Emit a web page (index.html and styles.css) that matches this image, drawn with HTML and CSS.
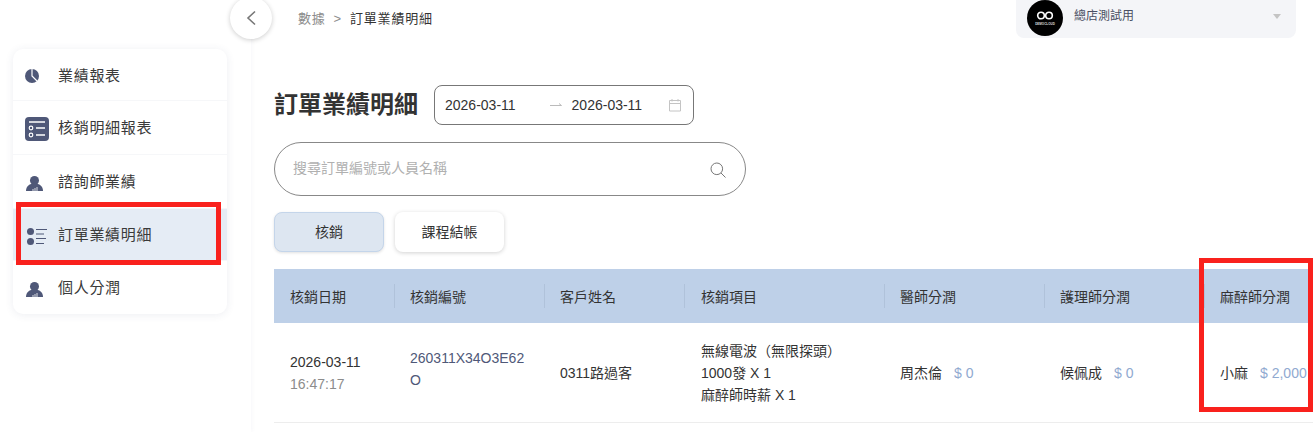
FILE: index.html
```html
<!DOCTYPE html>
<html lang="zh-Hant">
<head>
  <meta charset="UTF-8">
  <title>訂單業績明細</title>
  <link rel="stylesheet" href="styles.css">
</head>
<body>
  <div class="layout">
    <aside class="sidebar">
      <nav class="menu">
        <a class="menu-item">
          <svg class="menu-icon" viewBox="0 0 24 24"><circle cx="7" cy="12" r="7" fill="#4f5878"/><path d="M7 5v7l5 5" fill="none" stroke="#fff" stroke-width="1.200"/></svg>
          <span>業績報表</span>
        </a>
        <a class="menu-item">
          <svg class="menu-icon" viewBox="0 0 24 24"><rect width="24" height="24" rx="4" fill="#4f5878"/><path d="M4 5h16" stroke="#fff" stroke-width="1.500"/><circle cx="6" cy="11" r="1.800" fill="none" stroke="#fff" stroke-width="1.200"/><circle cx="6" cy="18" r="1.800" fill="none" stroke="#fff" stroke-width="1.200"/><path d="M11 11h9M11 18h9" stroke="#fff" stroke-width="1.500"/></svg>
          <span>核銷明細報表</span>
        </a>
        <a class="menu-item">
          <svg class="menu-icon" viewBox="0 0 24 24"><circle cx="9.500" cy="10.500" r="4.500" fill="#4f5878"/><path d="M1 21c0-5 3.500-7.500 8.500-7.500s8.500 2.500 8.500 7.500z" fill="#4f5878"/><path d="M8 21v-2M10 21v-3M12 21v-4" stroke="#fff" stroke-width=".8"/></svg>
          <span>諮詢師業績</span>
        </a>
        <a class="menu-item active">
          <svg class="menu-icon" viewBox="0 0 24 24"><circle cx="5.500" cy="8.500" r="3.500" fill="#4f5878"/><circle cx="5.500" cy="18.500" r="3.500" fill="#4f5878"/><path d="M11 6.500h11M11 11h8M11 15.500h10M11 20.500h8" stroke="#4f5878" stroke-width="1.100"/></svg>
          <span>訂單業績明細</span>
        </a>
        <a class="menu-item">
          <svg class="menu-icon" viewBox="0 0 24 24"><circle cx="9.500" cy="10.500" r="4.500" fill="#4f5878"/><path d="M1 21c0-5 3.500-7.500 8.500-7.500s8.500 2.500 8.500 7.500z" fill="#4f5878"/><path d="M8 21v-2M10 21v-3M12 21v-4" stroke="#fff" stroke-width=".8"/></svg>
          <span>個人分潤</span>
        </a>
      </nav>
    </aside>

    <button class="collapse-btn">
      <svg width="12" height="16" viewBox="0 0 12 16"><path d="M10 1.500 3 8l7 6.500" fill="none" stroke="#777" stroke-width="1.600"/></svg>
    </button>

    <main class="content">
      <header class="topbar">
        <div class="breadcrumb">
          <span class="crumb-parent">數據</span>
          <span class="crumb-sep">&gt;</span>
          <span>訂單業績明細</span>
        </div>
        <div class="store-select">
          <div class="store-logo">
            <svg width="18" height="9" viewBox="0 0 18 9"><circle cx="5" cy="4.500" r="3.300" fill="none" stroke="#fff" stroke-width="1.600"/><circle cx="13" cy="4.500" r="3.300" fill="none" stroke="#fff" stroke-width="1.600"/></svg>
            <span class="store-logo-text">DEMOCLOUD</span>
          </div>
          <span class="store-name">總店測試用</span>
          <span class="store-caret"></span>
        </div>
      </header>

      <div class="title-row">
        <h1>訂單業績明細</h1>
        <div class="date-range">
          <span class="date-value">2026-03-11</span>
          <svg class="date-arrow" width="12" height="6" viewBox="0 0 12 6"><path d="M0 3.500h11.500M9 1.500l2.500 2" fill="none" stroke="#bbb" stroke-width="1"/></svg>
          <span class="date-value">2026-03-11</span>
          <svg class="date-icon" width="14" height="14" viewBox="0 0 14 14"><path d="M1.500 2.500h11v10.500h-11zM1.500 5.500h11M4 1v2.500M10 1v2.500" fill="none" stroke="#c4c4c4" stroke-width="1"/></svg>
        </div>
      </div>

      <div class="search-box">
        <span class="search-placeholder">搜尋訂單編號或人員名稱</span>
        <svg class="search-icon" width="16" height="16" viewBox="0 0 16 16"><circle cx="6.800" cy="6.800" r="5.800" fill="none" stroke="#777" stroke-width="1"/><path d="m11 11 4.500 4.500" stroke="#777" stroke-width="1"/></svg>
      </div>

      <div class="tabs">
        <button class="tab tab-active">核銷</button>
        <button class="tab">課程結帳</button>
      </div>

      <div class="table-wrap">
        <table class="report">
          <colgroup>
            <col class="col-date"><col class="col-no"><col class="col-name"><col class="col-item"><col class="col-doctor"><col class="col-nurse"><col class="col-anes">
          </colgroup>
          <thead>
            <tr>
              <th>核銷日期</th>
              <th>核銷編號</th>
              <th>客戶姓名</th>
              <th>核銷項目</th>
              <th>醫師分潤</th>
              <th>護理師分潤</th>
              <th>麻醉師分潤</th>
            </tr>
          </thead>
          <tbody>
            <tr>
              <td>2026-03-11<div class="time">16:47:17</div></td>
              <td class="order-no">260311X34O3E62O</td>
              <td>0311路過客</td>
              <td>無線電波（無限探頭）<br>1000發 X 1<br>麻醉師時薪 X 1</td>
              <td>周杰倫<span class="money">$ 0</span></td>
              <td>候佩成<span class="money">$ 0</span></td>
              <td class="nowrap">小麻<span class="money">$ 2,000</span></td>
            </tr>
          </tbody>
        </table>
      </div>
    </main>
  </div>

  <div class="mark mark-menu"></div>
  <div class="mark mark-col"></div>
</body>
</html>
```

FILE: styles.css
```css
* {
  box-sizing: border-box;
}
html, body {
  height: 100%;
  margin: 0;
  overflow: hidden;
}
body {
  font-family: "Liberation Sans", "Noto Sans CJK TC", sans-serif;
  font-size: 14px;
  color: #333;
  background: #fff;
}
.layout {
  display: flex;
  height: 432px;
}

/* sidebar */
.sidebar {
  width: 251px;
  flex-shrink: 0;
  padding: 49px 24px 0 13px;
  box-shadow: 1px 0 4px rgba(90, 100, 160, 0.05);
}
.menu {
  border-radius: 10px;
  background: #fff;
  box-shadow: 0 1px 8px rgba(60, 70, 110, 0.09);
  overflow: hidden;
}
.menu-item {
  display: flex;
  align-items: center;
  height: 53px;
  padding: 0 0 2px 12px;
  gap: 9px;
  font-size: 15px;
  letter-spacing: 0.7px;
  color: #3a3a3a;
  border-bottom: 1px solid #f6f7f9;
}
.menu-item:nth-child(1),
.menu-item:nth-child(4) {
  height: 52px;
}
.menu-item:nth-child(2),
.menu-item:nth-child(3) {
  height: 54px;
}
.menu-item:nth-child(1) span {
  margin-top: 2px;
}
.menu-item:last-child {
  border-bottom: 0;
}
.menu-item.active {
  background: #e5ecf5;
}
.menu-icon {
  width: 24px;
  height: 24px;
  margin-top: 3px;
  flex-shrink: 0;
}
.menu-item:nth-child(1) .menu-icon,
.menu-item:nth-child(2) .menu-icon {
  margin-top: 5px;
}
.collapse-btn {
  position: absolute;
  left: 230px;
  top: -3px;
  width: 42px;
  height: 42px;
  border: 0;
  border-radius: 50%;
  background: #fff;
  box-shadow: 0 1px 5px rgba(0, 0, 0, 0.2);
  display: flex;
  align-items: center;
  justify-content: center;
}

/* main */
.content {
  flex: 1;
  min-width: 0;
  padding-left: 23px;
}
.topbar {
  display: flex;
  justify-content: space-between;
  height: 38px;
}
.breadcrumb {
  display: flex;
  gap: 8px;
  padding: 10px 0 0 24px;
  font-size: 13px;
  letter-spacing: 0.8px;
  line-height: 18px;
}
.crumb-parent,
.crumb-sep {
  color: #8c8c8c;
}
.store-select {
  display: flex;
  align-items: center;
  width: 280px;
  height: 38px;
  margin-right: 17px;
  padding: 0 15px 0 11px;
  background: #f4f5f8;
  border-radius: 0 0 8px 8px;
}
.store-logo {
  display: flex;
  flex-direction: column;
  align-items: center;
  justify-content: center;
  gap: 2px;
  width: 36px;
  height: 36px;
  margin-top: -2px;
  border-radius: 50%;
  background: #000;
}
.store-logo-text {
  font-size: 3px;
  font-weight: bold;
  color: #ddd;
}
.store-name {
  flex: 1;
  margin: 0 0 10px 11px;
  font-size: 12px;
  color: #4a4f63;
}
.store-caret {
  margin-bottom: 6px;
  border: 4px solid transparent;
  border-top: 5px solid #c4c4c4;
  border-bottom: 0;
}
.title-row {
  display: flex;
  align-items: center;
  gap: 16px;
  margin-top: 47px;
}
h1 {
  margin: 0;
  padding-bottom: 5px;
  font-size: 24px;
  font-weight: bold;
  color: #333;
}
.date-range {
  display: flex;
  align-items: center;
  width: 260px;
  height: 40px;
  padding: 0 11px 0 10px;
  border: 1px solid #777;
  border-radius: 8px;
  font-size: 14px;
}
.date-value {
  color: #333;
}
.date-arrow {
  margin: 0 10px 0 34px;
}
.date-icon {
  margin-left: auto;
}
.search-box {
  display: flex;
  align-items: center;
  justify-content: space-between;
  width: 472px;
  height: 54px;
  margin-top: 17px;
  padding: 0 19px 0 18px;
  border: 1px solid #888;
  border-radius: 27px;
}
.search-placeholder {
  padding-bottom: 4px;
  color: #b0b0b0;
}
.search-icon {
  margin-top: 2px;
}
.tabs {
  display: flex;
  gap: 11px;
  margin-top: 16px;
}
.tab {
  width: 110px;
  height: 40px;
  padding: 0 0 3px;
  border: 0;
  border-radius: 8px;
  background: #fff;
  box-shadow: 0 1px 4px rgba(0, 0, 0, 0.18);
  font: inherit;
  color: #333;
}
.tab + .tab {
  width: 109px;
}
.tab-active {
  background: #dde6f1;
  border: 1px solid #c4d5ea;
  box-shadow: 0 1px 3px rgba(0, 0, 0, 0.12);
}

/* table */
.table-wrap {
  margin-top: 17px;
  overflow: hidden;
}
.report {
  width: 1040px;
  table-layout: fixed;
  border-collapse: collapse;
}
.col-date { width: 120px; }
.col-no { width: 150px; }
.col-name { width: 140px; }
.col-item { width: 200px; }
.col-doctor { width: 160px; }
.col-nurse { width: 160px; }
.col-anes { width: 110px; }
.report th {
  position: relative;
  height: 54px;
  padding: 0 0 0 16px;
  background: #bed0e8;
  font-weight: normal;
  text-align: left;
  color: #333;
}
.report th + th::before {
  content: "";
  position: absolute;
  left: 0;
  top: 15px;
  bottom: 15px;
  width: 1px;
  background: #b0c2da;
}
.report td {
  height: 99px;
  padding: 1px 0 0 16px;
  border-bottom: 1px solid #ededed;
  line-height: 22px;
  vertical-align: middle;
  color: #333;
}
.report th:nth-child(4),
.report td:nth-child(4) {
  padding-left: 17px;
}
.report .order-no {
  padding: 0 18px 7px 16px;
  color: #4f5878;
  word-break: break-all;
}
.report .nowrap {
  white-space: nowrap;
}
.time {
  color: #8c8c8c;
}
.money {
  margin-left: 12px;
  color: #90a9d0;
}

/* red annotation boxes */
.mark {
  position: absolute;
  border: 5px solid #f9211d;
}
.mark-menu {
  left: 16px;
  top: 202px;
  width: 205px;
  height: 63px;
}
.mark-col {
  left: 1199px;
  top: 258px;
  width: 114px;
  height: 154px;
}
```
